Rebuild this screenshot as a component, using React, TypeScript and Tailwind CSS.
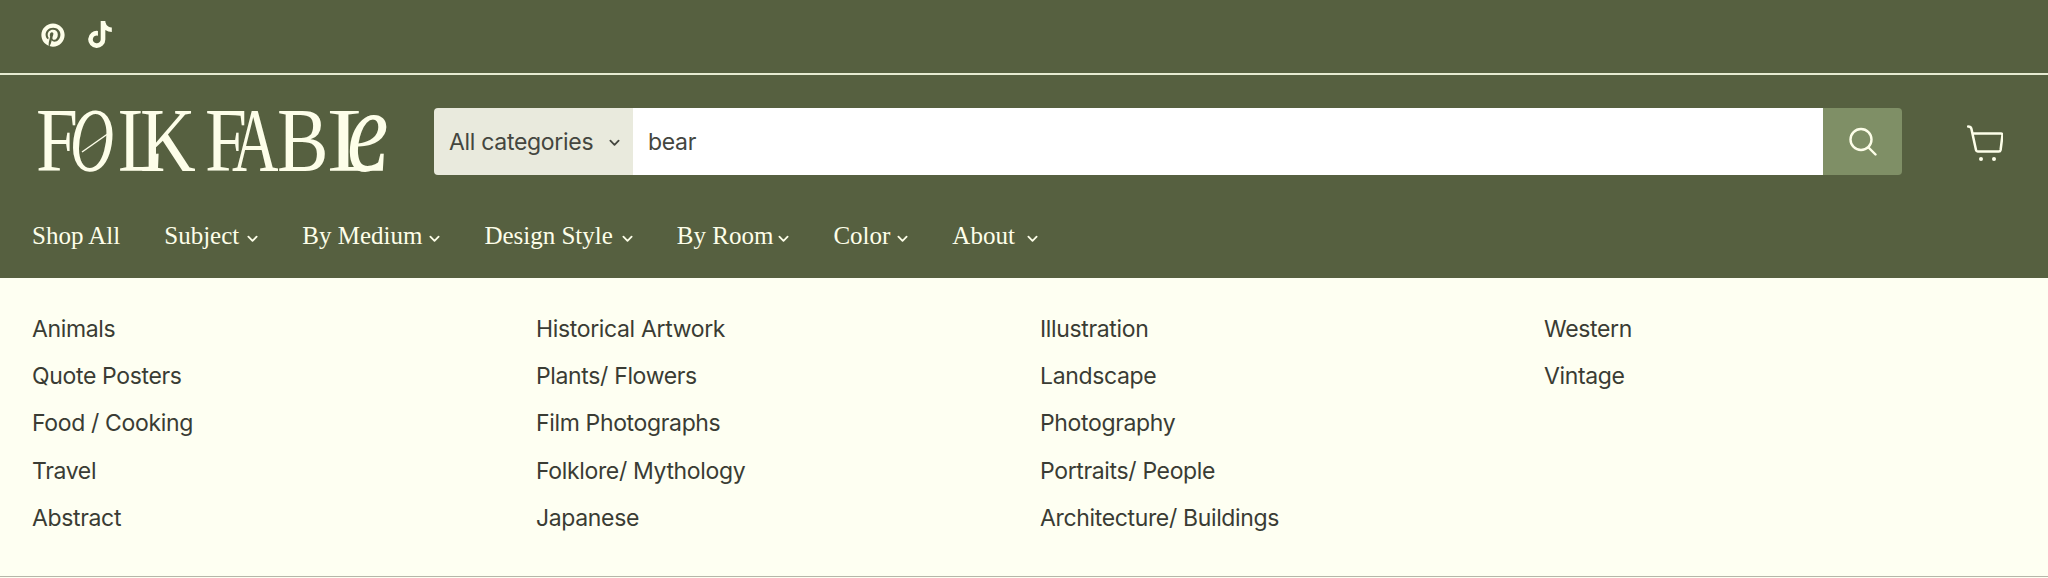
import React from 'react';
import { FaPinterest, FaTiktok } from 'react-icons/fa6';

const navItems = [
    { label: 'Shop All', chevron: false, gap: 'ml-2' },
    { label: 'Subject', chevron: true, gap: 'ml-2' },
    { label: 'By Medium', chevron: true, gap: 'ml-[7px]' },
    { label: 'Design Style', chevron: true, gap: 'ml-[9px]' },
    { label: 'By Room', chevron: true, gap: 'ml-[5px]' },
    { label: 'Color', chevron: true, gap: 'ml-[7px]' },
    { label: 'About', chevron: true, gap: 'ml-3' }
];

const columns = [
    ['Animals', 'Quote Posters', 'Food / Cooking', 'Travel', 'Abstract'],
    ['Historical Artwork', 'Plants/ Flowers', 'Film Photographs', 'Folklore/ Mythology', 'Japanese'],
    ['Illustration', 'Landscape', 'Photography', 'Portraits/ People', 'Architecture/ Buildings'],
    ['Western', 'Vintage']
];

// x, horizontal and vertical scale of each logo letter
const logoLetters = [
    { ch: 'F', x: 0, sx: 0.82, sy: 1 },
    { ch: 'O', x: 34, sx: 0.66, sy: 1, italic: true },
    { ch: 'L', x: 82, sx: 0.8, sy: 1 },
    { ch: 'K', x: 104, sx: 0.84, sy: 1 },
    { ch: 'F', x: 169, sx: 0.82, sy: 1 },
    { ch: 'A', x: 196, sx: 0.7, sy: 1 },
    { ch: 'B', x: 241, sx: 0.84, sy: 1 },
    { ch: 'L', x: 291, sx: 1.12, sy: 1 },
    { ch: 'e', x: 311, sx: 1.06, sy: 1.34, italic: true, size: 88 }
];

const Logo = () => (
    <svg width="358" height="66" viewBox="0 0 358 66" className="block overflow-visible" role="img" aria-label="Folk Fable">
        {logoLetters.map((l, i) => (
            <text
                key={i}
                transform={`translate(${l.x} 62) scale(${l.sx} ${l.sy})`}
                fontFamily="'Liberation Serif', serif"
                fontSize={l.size ?? 92}
                fontStyle={l.italic ? 'italic' : 'normal'}
                fill="#fdfee9"
            >
                {l.ch}
            </text>
        ))}
        {/* slash through the O */}
        <path d="M46 43 73 24" stroke="#fdfee9" strokeWidth="1.5" fill="none" />
    </svg>
);

const SmallChevron = ({ className = '' }: { className?: string }) => (
    <svg width="11" height="8" viewBox="0 0 12 8" fill="none" className={className}>
        <path d="M1.5 1.5 6 6l4.5-4.5" stroke="currentColor" strokeWidth="2" strokeLinecap="round" strokeLinejoin="round" />
    </svg>
);

const SearchIcon = () => (
    <svg width="28" height="30" viewBox="0 0 28 30" fill="none" stroke="#fdfee9" strokeWidth="2.4" strokeLinecap="round">
        <circle cx="12" cy="12.5" r="10.5" />
        <path d="m19.5 20.5 7 7" />
    </svg>
);

const CartIcon = () => (
    <svg width="36" height="38" viewBox="0 0 36 38" fill="none" stroke="#fdfee9" strokeWidth="2.5" strokeLinecap="round" strokeLinejoin="round">
        <path d="M1 1.500c2 0 3 .6 3.400 2.200L9 25c.2 1 .8 1.500 1.800 1.500h21c1 0 1.600-.5 1.800-1.500L35.500 10c.1-1-.4-1.500-1.400-1.500H6" />
        <circle cx="14" cy="34" r="2" fill="#fdfee9" stroke="none" />
        <circle cx="27" cy="34" r="2" fill="#fdfee9" stroke="none" />
    </svg>
);

export default function App() {
    return (
        <div className="w-[2048px] h-[578px] overflow-hidden bg-[#fefff2] font-['Inter',sans-serif]">
            {/* Top bar */}
            <div className="h-[75px] bg-[#566040] border-b-2 border-[#e6ebd2] flex items-center gap-[23px] pl-[41px] pb-1 text-[#fdfee9]">
                <FaPinterest className="w-6 h-6" />
                <FaTiktok className="w-[24px] h-[27px]" />
            </div>

            {/* Header */}
            <div className="h-[203px] bg-[#566040]">
                <div className="flex items-start pt-[33px] pl-[36px]">
                    <div className="w-[398px] h-[67px] flex items-center">
                        <Logo />
                    </div>
                    <div className="w-[1468px] h-[67px] flex rounded-[4px] overflow-hidden text-[23px] tracking-[-0.3px] text-[#44463f]">
                        <div className="w-[199px] bg-[#e9eadd] flex items-center pl-[15px] pt-0.5">
                            <span>All categories</span>
                            <SmallChevron className="ml-[16px] text-[#44463f]" />
                        </div>
                        <div className="flex-1 bg-white flex items-center pl-[15px] pt-0.5">bear</div>
                        <div className="w-[79px] bg-[#7f8f66] flex items-center justify-center">
                            <SearchIcon />
                        </div>
                    </div>
                    <div className="ml-[65px] mt-[17px]">
                        <CartIcon />
                    </div>
                </div>
                <nav className="flex items-center gap-11 pl-8 mt-[45px] font-['Liberation_Serif',serif] text-[25px] leading-8 text-[#fdfee9]">
                    {navItems.map(item => (
                        <div key={item.label} className="flex items-center">
                            <span>{item.label}</span>
                            {item.chevron && <SmallChevron className={`${item.gap} mt-1.5`} />}
                        </div>
                    ))}
                </nav>
            </div>

            {/* Dropdown */}
            <div className="h-[299px] border-b border-[#b5b6a9] grid grid-cols-4 pl-8 pt-[35px] text-[23px] tracking-[-0.35px] text-[#3a3c34]">
                {columns.map((col, i) => (
                    <ul key={i} className="flex flex-col gap-[15.2px]">
                        {col.map(link => (
                            <li key={link} className="leading-8">{link}</li>
                        ))}
                    </ul>
                ))}
            </div>
        </div>
    );
}
